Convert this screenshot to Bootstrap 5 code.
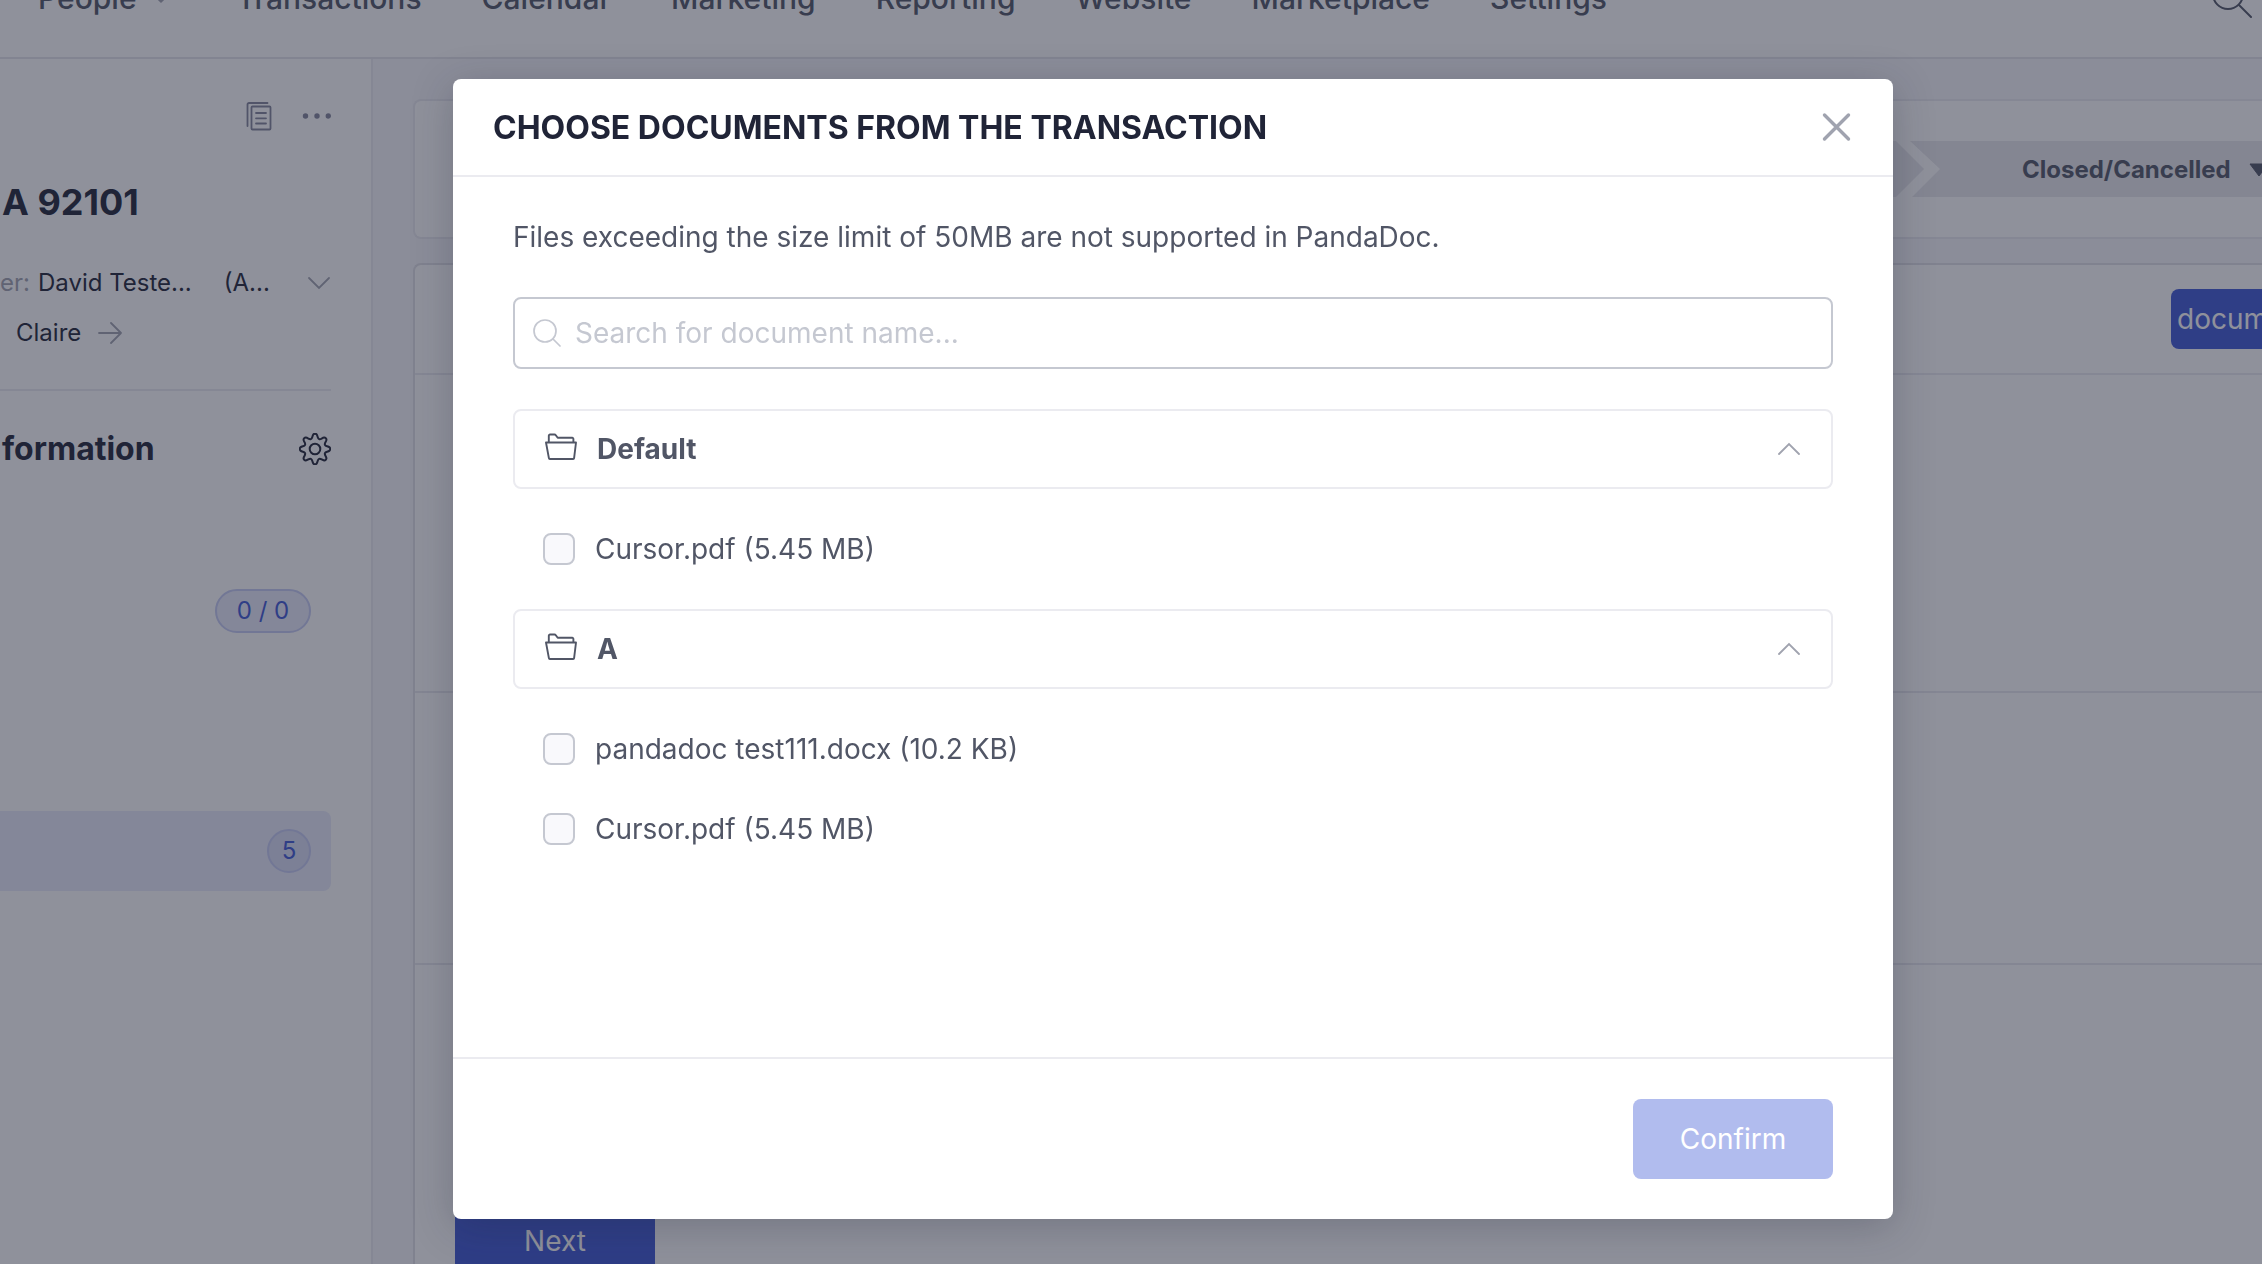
<!DOCTYPE html>
<html lang="en">
<head>
<meta charset="utf-8">
<meta name="viewport" content="width=device-width, initial-scale=1">
<title>Choose documents from the transaction</title>
<link href="https://cdn.jsdelivr.net/npm/bootstrap@5.3.0/dist/css/bootstrap.min.css" rel="stylesheet">
<style>
  :root { --ink: #202437; --body-ink: #515666; --muted: #a0a3af; --line: #ebebf0; --brand: #3e58d5; }
  body { font-family: Inter, "Liberation Sans", sans-serif; font-size: 28px; line-height: 40px; color: var(--ink); background: #f6f6fb; height: 100vh; overflow: hidden; }
  svg { display: block; flex: none; fill: none; stroke: currentColor; }
  a { color: inherit; text-decoration: none; }
  .tone-muted { color: var(--muted); }
  .tone-mid { color: #82859a; }
  .tone-body { color: var(--body-ink); }

  /* header, scrolled half out of view */
  .topbar { height: 120px; margin-top: -61px; padding: 0 10px 0 38px; background: #fff; border-bottom: 2px solid #e4e4ea; }
  .topbar .nav-link { padding: 0; font-size: 30px; font-weight: 500; color: var(--body-ink); }
  .main-nav { gap: 60px; }

  .side { width: 373px; padding: 40px 40px 0 2px; background: #fff; border-right: 2px solid #eaeaf0; font-size: 24px; }
  .side-title { font-size: 36px; font-weight: 700; line-height: 48px; margin: 45px 0 37px; }
  .side-rows { gap: 10px; padding-bottom: 36px; border-bottom: 2px solid #eaeaf0; margin-left: -2px; }
  .side-head { font-size: 32px; font-weight: 700; margin: 38px 0 102px; }
  .side-item { height: 80px; margin-left: -2px; padding-right: 20px; border-radius: 0 8px 8px 0; }
  .side-item.active { background: #e8eafb; margin-top: 160px; }
  .count { min-width: 44px; height: 44px; line-height: 40px; border: 2px solid #c4caf2; border-radius: 22px; background: #e8eafb; color: var(--brand); text-align: center; }
  .count.wide { min-width: 96px; }
  .active .count { background: #d8dcf4; }

  .main { padding: 40px 0 0 40px; }
  .panel { background: #fff; border: 2px solid #eaeaf0; border-right: 0; border-radius: 8px 0 0 8px; }
  .panel.docs { border-color: #e0e0e6; }
  .stages { padding: 40px 0 40px 40px; }
  .stage { height: 56px; background: #e8e8ec; font-size: 24px; font-weight: 700; color: var(--body-ink); clip-path: polygon(0 0, calc(100% - 28px) 0, 100% 50%, calc(100% - 28px) 100%, 0 100%); }
  .stage-last { width: 352px; margin-left: -14px; padding: 2px 0 0 112px; clip-path: polygon(0 0, 100% 0, 100% 100%, 2px 100%, 30px 50%); overflow: hidden; gap: 18px; }
  .tool { height: 110px; border-bottom: 2px solid #eaeaf0; }
  .band { border-bottom: 2px solid #e8e8ee; }
  .band-a { height: 318px; }
  .band-b { height: 272px; }
  .btn-brand { background: var(--brand); border: 0; color: #fff; font-size: 28px; line-height: 40px; padding: 20px; width: 200px; border-radius: 8px; }
  .btn-cut { width: 91px; padding: 10px 0 10px 6px; border-radius: 8px 0 0 8px; overflow: hidden; text-align: left; white-space: nowrap; }
  .next-row { padding: 236px 40px 0; }

  .modal-backdrop { background: var(--ink); }
  .modal { padding-left: 84px; }
  .modal-dialog { max-width: 1440px; margin-top: 79px; }
  .modal-content { border: 0; border-radius: 8px; color: var(--body-ink); box-shadow: 0 8px 40px rgba(32, 36, 55, .25); }
  .modal-header { height: 98px; padding: 0 40px; border-bottom: 2px solid var(--line); }
  .modal-title { font-size: 32px; font-weight: 700; line-height: 40px; padding-top: 2px; color: var(--ink); }
  .close-x { border: 0; background: none; padding: 0; color: var(--muted); }
  .modal-body { min-height: 880px; padding: 40px 60px; }
  .modal-footer { padding: 40px 60px; border-top: 2px solid var(--line); }
  .modal-footer > * { margin: 0; }
  .modal-footer .btn-brand:disabled { background: var(--brand); color: #fff; opacity: .4; }
  .find { height: 72px; padding: 0 18px; gap: 14px; border: 2px solid #c5c8d1; border-radius: 8px; color: #c5c8d1; }
  .find input { border: 0; padding: 0; font-size: 28px; line-height: 40px; color: var(--body-ink); box-shadow: none; background: none; }
  .find input::placeholder { color: #c5c8d1; }
  .folder { height: 80px; padding: 0 30px; gap: 20px; border: 2px solid var(--line); border-radius: 8px; background: #fff; color: var(--body-ink); font-weight: 700; }
  .files { padding: 20px 30px; }
  .file-row { height: 80px; gap: 20px; }
  .file-row .form-check-input { width: 32px; height: 32px; margin: 0; border: 2px solid #c5c8d1; border-radius: 8px; background: #f9f9fc; flex: none; }
</style>
</head>
<body class="d-flex flex-column">

<header class="topbar d-flex align-items-center justify-content-between flex-shrink-0">
  <nav class="main-nav d-flex align-items-center">
    <a class="nav-link d-flex align-items-center gap-3 pe-2" href="#">People
      <svg class="tone-muted" width="16" height="12" viewBox="0 0 16 12" stroke-width="3"><path d="M1 2l7 7 7-7"/></svg></a>
    <a class="nav-link" href="#">Transactions</a>
    <a class="nav-link" href="#">Calendar</a>
    <a class="nav-link" href="#">Marketing</a>
    <a class="nav-link" href="#">Reporting</a>
    <a class="nav-link" href="#">Website</a>
    <a class="nav-link" href="#">Marketplace</a>
    <a class="nav-link" href="#">Settings</a>
  </nav>
  <svg class="tone-body" width="40" height="40" viewBox="0 0 40 40" stroke-width="2" stroke-linecap="round"><circle cx="16" cy="16" r="15"/><path d="M27 27l12 12"/></svg>
</header>

<div class="d-flex flex-grow-1">
  <aside class="side flex-shrink-0">
    <div class="d-flex justify-content-end align-items-center gap-4 tone-mid">
      <svg width="34" height="34" viewBox="0 0 34 34" stroke-width="1.800" stroke-linejoin="round" stroke-linecap="round"><path d="M4.500 27V5.500A1.500 1.500 0 0 1 6 4H24.500"/><rect x="8.500" y="7.500" width="19" height="23" rx="1"/><path d="M13 14h10M13 19.300h10M13 24.500h10"/></svg>
      <svg width="30" height="8" viewBox="0 0 30 8" stroke-width="5.400" stroke-linecap="round"><path d="M4.500 4h.01M16 4h.01M27.300 4h.01"/></svg>
    </div>
    <h1 class="side-title">A 92101</h1>
    <div class="side-rows d-flex flex-column">
      <div class="d-flex align-items-center">
        <span class="tone-muted">er:</span><span class="ms-2">David Teste...</span><span class="ms-4 ps-2">(A...</span>
        <svg class="ms-auto tone-muted" width="24" height="14" viewBox="0 0 24 14" stroke-width="1.800" stroke-linecap="round"><path d="M2 2l10 10L22 2"/></svg>
      </div>
      <div class="d-flex align-items-center ps-3">
        <a href="#">Claire</a>
        <svg class="ms-3 tone-muted" width="26" height="22" viewBox="0 0 26 22" stroke-width="1.800" stroke-linecap="round" stroke-linejoin="round"><path d="M2 11h22M14 1l10 10-10 10"/></svg>
      </div>
    </div>
    <h2 class="side-head d-flex align-items-center justify-content-between lh-sm">formation
      <svg width="32" height="32" viewBox="0 0 32 32" stroke-width="2" stroke-linejoin="round"><circle cx="16" cy="16" r="5.300"/><path id="gear" d=""/></svg></h2>
    <div class="side-item d-flex align-items-center justify-content-end"><span class="count wide">0 / 0</span></div>
    <div class="side-item active d-flex align-items-center justify-content-end"><span class="count">5</span></div>
  </aside>

  <main class="main flex-grow-1 d-flex flex-column gap-4">
    <section class="panel stages d-flex">
      <div class="stage flex-grow-1"></div>
      <div class="stage stage-last d-flex align-items-center flex-shrink-0">Closed/Cancelled
        <svg class="tone-body" width="20" height="14" viewBox="0 0 20 14" stroke-width="1"><path d="M1 1h18L10 13z" fill="currentColor"/></svg></div>
    </section>
    <section class="panel docs flex-grow-1">
      <div class="tool d-flex align-items-center justify-content-end"><button class="btn-brand btn-cut" type="button">docum</button></div>
      <div class="band band-a"></div>
      <div class="band band-b"></div>
      <div class="next-row"><button class="btn-brand rounded-0" type="button">Next</button></div>
    </section>
  </main>
</div>

<div class="modal-backdrop show"></div>
<div class="modal d-block" tabindex="-1" role="dialog" aria-modal="true" aria-labelledby="dlgTitle">
  <div class="modal-dialog">
    <div class="modal-content">
      <div class="modal-header">
        <h2 class="modal-title" id="dlgTitle">CHOOSE DOCUMENTS FROM THE TRANSACTION</h2>
        <button class="close-x" type="button" aria-label="Close"><svg width="32" height="32" viewBox="0 0 32 32" stroke-width="3.400" stroke-linecap="round"><path d="M3.500 4l24 24M27.500 4l-24 24"/></svg></button>
      </div>
      <div class="modal-body">
        <p class="mb-0 pb-3">Files exceeding the size limit of 50MB are not supported in PandaDoc.</p>
        <label class="find d-flex align-items-center mt-4">
          <svg width="28" height="28" viewBox="0 0 28 28" stroke-width="1.700" stroke-linecap="round"><circle cx="12" cy="12" r="11"/><path d="M20 20l7 7"/></svg>
          <input class="form-control" type="text" placeholder="Search for document name..." aria-label="Search for document name">
        </label>
        <div class="pt-3 mt-4">
          <button class="folder w-100 d-flex align-items-center" type="button">
            <svg width="32" height="32" viewBox="0 0 32 32" stroke-width="1.900" stroke-linejoin="round"><path d="M3.800 9.500V2.700A1.200 1.200 0 0 1 5 1.500h4.500q.8 0 1.300.7l1.900 2.600h14.500a1.200 1.200 0 0 1 1.200 1.200v3.500M1 9.500h30l-1.900 15.600a1 1 0 0 1-1 .9H4.900a1 1 0 0 1-1-.9z"/></svg>
            <span class="me-auto">Default</span>
            <svg class="tone-muted" width="24" height="14" viewBox="0 0 24 14" stroke-width="1.800" stroke-linecap="round"><path d="M2 12L12 2l10 10"/></svg>
          </button>
          <div class="files">
            <label class="file-row d-flex align-items-center"><input class="form-check-input" type="checkbox">Cursor.pdf (5.45 MB)</label>
          </div>
          <button class="folder w-100 d-flex align-items-center" type="button">
            <svg width="32" height="32" viewBox="0 0 32 32" stroke-width="1.900" stroke-linejoin="round"><path d="M3.800 9.500V2.700A1.200 1.200 0 0 1 5 1.500h4.500q.8 0 1.300.7l1.900 2.600h14.500a1.200 1.200 0 0 1 1.200 1.200v3.500M1 9.500h30l-1.900 15.600a1 1 0 0 1-1 .9H4.900a1 1 0 0 1-1-.9z"/></svg>
            <span class="me-auto">A</span>
            <svg class="tone-muted" width="24" height="14" viewBox="0 0 24 14" stroke-width="1.800" stroke-linecap="round"><path d="M2 12L12 2l10 10"/></svg>
          </button>
          <div class="files">
            <label class="file-row d-flex align-items-center"><input class="form-check-input" type="checkbox">pandadoc test111.docx (10.2 KB)</label>
            <label class="file-row d-flex align-items-center"><input class="form-check-input" type="checkbox">Cursor.pdf (5.45 MB)</label>
          </div>
        </div>
      </div>
      <div class="modal-footer"><button class="btn-brand" type="button" disabled>Confirm</button></div>
    </div>
  </div>
</div>

<script src="https://cdn.jsdelivr.net/npm/bootstrap@5.3.0/dist/js/bootstrap.bundle.min.js"></script>
<script>
  // eight-tooth gear outline, smoothed through its mid points
  const pts = [];
  for (let i = 0; i < 8; i++) {
    [[-17, 10.8], [-9, 14], [-4, 15.3], [4, 15.3], [9, 14], [17, 10.8]].forEach(([a, r]) => {
      const t = (i * 45 + a) * Math.PI / 180;
      pts.push([16 + r * Math.sin(t), 16 - r * Math.cos(t)]);
    });
  }
  const mid = (p, q) => [(p[0] + q[0]) / 2, (p[1] + q[1]) / 2].map(v => v.toFixed(2)).join(' ');
  let d = 'M' + mid(pts[pts.length - 1], pts[0]);
  pts.forEach((p, i) => { d += 'Q' + p.map(v => v.toFixed(2)).join(' ') + ' ' + mid(p, pts[(i + 1) % pts.length]); });
  document.getElementById('gear').setAttribute('d', d + 'Z');
</script>
</body>
</html>
